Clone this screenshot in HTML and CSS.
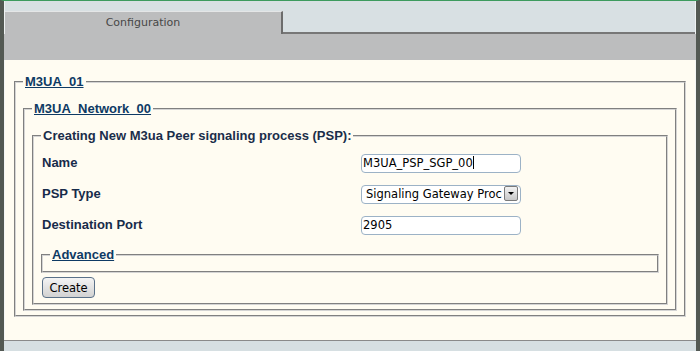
FILE: index.html
```html
<!DOCTYPE html>
<html>
<head>
<meta charset="utf-8">
<title>Configuration</title>
<link rel="stylesheet" href="styles.css">
</head>
<body>
<div class="frame">
  <div class="tabbar">
    <div class="tab">Configuration</div>
    <div class="tab-rest"></div>
  </div>
  <div class="band"></div>
  <div class="content">
    <fieldset class="fs">
      <legend class="lg link">M3UA_01</legend>
      <fieldset class="fs">
        <legend class="lg link">M3UA_Network_00</legend>
        <fieldset class="fs fs-form">
          <legend class="lg">Creating New M3ua Peer signaling process (PSP):</legend>
          <div class="grid">
            <label class="lbl">Name</label>
            <span class="field">
              <input class="inp" type="text" value="M3UA_PSP_SGP_00">
              <span class="caret"></span>
            </span>
            <label class="lbl">PSP Type</label>
            <span class="field">
              <select class="sel">
                <option>Signaling Gateway Process</option>
              </select>
              <span class="sel-btn"><span class="tri"></span></span>
            </span>
            <label class="lbl">Destination Port</label>
            <span class="field">
              <input class="inp" type="text" value="2905">
            </span>
          </div>
          <fieldset class="fs fs-adv">
            <legend class="lg link">Advanced</legend>
          </fieldset>
          <button class="btn" type="button">Create</button>
        </fieldset>
      </fieldset>
    </fieldset>
  </div>
  <div class="footer"></div>
</div>
</body>
</html>
```
FILE: styles.css
```css
html, body {
  margin: 0;
  padding: 0;
  width: 700px;
  height: 351px;
  overflow: hidden;
}
.frame {
  box-sizing: border-box;
  width: 700px;
  height: 351px;
  display: flex;
  flex-direction: column;
  border-left: 4px solid #535953;
  border-right: 4px solid #535953;
  border-top: 1px solid #3d9b5e;
  background: #d8e0e3;
}
.tabbar {
  height: 33px;
  display: flex;
  align-items: flex-end;
  background: #d8e0e3;
  border-left: 1px solid #eef2f3;
  border-right: 1px solid #eef2f3;
}
.tab {
  box-sizing: border-box;
  width: 278px;
  height: 23px;
  background: #bcbdbe;
  border-top: 1px solid #e4e6e7;
  border-right: 2px solid #6c6c6c;
  text-align: center;
  font-family: "DejaVu Sans", sans-serif;
  font-size: 11px;
  color: #474747;
  line-height: 13px;
  padding-top: 4px;
}
.tab-rest {
  flex: 1;
  align-self: stretch;
  border-bottom: 2px solid #777;
}
.band {
  height: 26px;
  background: #bcbdbe;
}
.content {
  flex: 1;
  box-sizing: border-box;
  background: #fffcf2;
  border-left: 1px solid #f4f6f6;
  border-right: 1px solid #f4f6f6;
  padding: 14px 9px 0 9px;
}
.footer {
  height: 10px;
  border-top: 1px solid #8a8a8a;
  background: #d6dfe2;
}
.fs {
  margin: 0;
  min-width: 0;
  border: 2px groove #d4d4d4;
  padding: 12px 7px 4px 7px;
}
.fs-form {
  padding-top: 10px;
  padding-bottom: 5px;
}
.fs-adv {
  margin-top: 13px;
  padding: 0 7px 9px 7px;
}
.lg {
  padding: 0 2px;
  font-family: "Liberation Sans", Arial, sans-serif;
  font-weight: bold;
  font-size: 13px;
  line-height: 15px;
  color: #1a2d4a;
}
.link {
  color: #0e3a64;
  text-decoration: underline;
}
.grid {
  display: grid;
  grid-template-columns: 320px 160px;
  row-gap: 12px;
  align-items: center;
}
.lbl {
  font-family: "Liberation Sans", Arial, sans-serif;
  font-weight: bold;
  font-size: 13px;
  line-height: 15px;
  color: #172b4a;
  padding-left: 1px;
}
.field {
  position: relative;
  display: block;
  height: 19px;
}
.inp, .sel {
  box-sizing: border-box;
  width: 160px;
  height: 19px;
  margin: 0;
  border: 1px solid #9cb2c6;
  border-radius: 4px;
  background: #fff;
  font-family: "DejaVu Sans", sans-serif;
  font-size: 11.5px;
  color: #000;
  outline: none;
}
.inp {
  padding: 0 0 0 1px;
}
.sel {
  appearance: none;
  -webkit-appearance: none;
  padding: 0 18px 0 4px;
}
.caret {
  position: absolute;
  left: 112px;
  top: 3px;
  width: 1px;
  height: 13px;
  background: #000;
}
.sel-btn {
  position: absolute;
  right: 3px;
  top: 2px;
  box-sizing: border-box;
  width: 14px;
  height: 15px;
  border: 1px solid #7a7a7a;
  border-radius: 2px;
  background: linear-gradient(#f2f2f2, #c8c8c8);
  display: flex;
  align-items: center;
  justify-content: center;
}
.tri {
  width: 0;
  height: 0;
  border-left: 3px solid transparent;
  border-right: 3px solid transparent;
  border-top: 3px solid #000;
}
.btn {
  display: block;
  margin: 4px 0 0 1px;
  box-sizing: border-box;
  width: 53px;
  height: 21px;
  padding: 0;
  border: 1px solid #5a7189;
  border-radius: 4px;
  background: linear-gradient(#f4f4f4, #d2d2d2);
  font-family: "DejaVu Sans", sans-serif;
  font-size: 11.5px;
  color: #000;
}
```
